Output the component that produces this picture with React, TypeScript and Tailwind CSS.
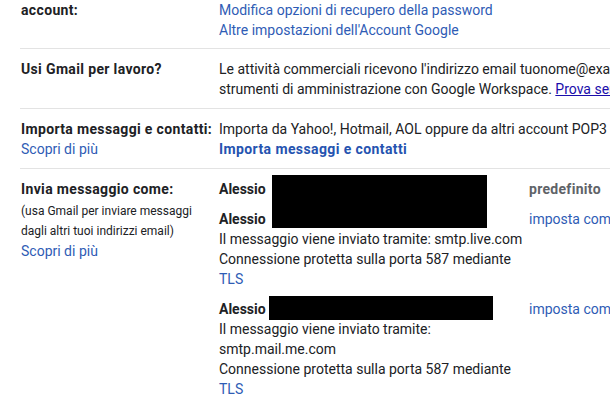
export default function App() {
  return (
    <div className="w-[610px] h-[406px] overflow-hidden bg-white font-['Roboto',sans-serif] text-[14px] leading-5 text-[#202124]">
      {/* Recupero account */}
      <div className="ml-5 flex border-b border-[#e3e3e3] pb-2">
        <div className="w-[199px] shrink-0 pl-px font-bold tracking-[0.35px]">account:</div>
        <div className="flex flex-col whitespace-nowrap text-[#2f5cb5]">
          <span>Modifica opzioni di recupero della password</span>
          <span>Altre impostazioni dell'Account Google</span>
        </div>
      </div>

      {/* Workspace */}
      <div className="ml-5 flex border-b border-[#e3e3e3] pt-[10px] pb-[9px]">
        <div className="w-[199px] shrink-0 pl-px font-bold tracking-[0.35px]">Usi Gmail per lavoro?</div>
        <div className="flex flex-col whitespace-nowrap">
          <span>Le attività commerciali ricevono l'indirizzo email tuonome@example.com</span>
          <span>
            strumenti di amministrazione con Google Workspace.{' '}
            <span className="text-[#1a0dab] underline">Prova senza costi</span>
          </span>
        </div>
      </div>

      {/* Importa */}
      <div className="ml-5 flex border-b border-[#e3e3e3] pt-[10px] pb-[9px]">
        <div className="w-[199px] shrink-0 pl-px flex flex-col whitespace-nowrap">
          <span className="font-bold tracking-[0.35px]">Importa messaggi e contatti:</span>
          <span className="text-[#2f5cb5]">Scopri di più</span>
        </div>
        <div className="flex flex-col whitespace-nowrap">
          <span>Importa da Yahoo!, Hotmail, AOL oppure da altri account POP3</span>
          <span className="font-bold tracking-[0.4px] text-[#2553b0]">Importa messaggi e contatti</span>
        </div>
      </div>

      {/* Invia messaggio come */}
      <div className="ml-5 flex pt-[10px]">
        <div className="w-[199px] shrink-0 pl-px flex flex-col whitespace-nowrap">
          <span className="font-bold tracking-[0.35px]">Invia messaggio come:</span>
          <span className="mt-[2px] text-[12px] leading-5">(usa Gmail per inviare messaggi</span>
          <span className="text-[12px] leading-5">dagli altri tuoi indirizzi email)</span>
          <span className="text-[#2f5cb5]">Scopri di più</span>
        </div>
        <div className="relative flex flex-col gap-[10px] whitespace-nowrap">
          <div className="flex">
            <div className="w-[310px] font-bold">Alessio</div>
            <div className="font-bold tracking-[0.3px] text-[#5f6368]">predefinito</div>
          </div>
          <div className="flex">
            <div className="w-[310px] flex flex-col">
              <span className="font-bold">Alessio</span>
              <span>Il messaggio viene inviato tramite: smtp.live.com</span>
              <span>Connessione protetta sulla porta 587 mediante</span>
              <span className="text-[#2f5cb5]">TLS</span>
            </div>
            <div className="text-[#2f5cb5]">imposta come predefinito</div>
          </div>
          <div className="flex">
            <div className="w-[310px] flex flex-col">
              <span className="font-bold">Alessio</span>
              <span>Il messaggio viene inviato tramite:</span>
              <span>smtp.mail.me.com</span>
              <span>Connessione protetta sulla porta 587 mediante</span>
              <span className="text-[#2f5cb5]">TLS</span>
            </div>
            <div className="text-[#2f5cb5]">imposta come predefinito</div>
          </div>

          {/* redazioni */}
          <div className="absolute left-[53px] top-[-4px] h-[53px] w-[215px] bg-black" />
          <div className="absolute left-[50px] top-[117px] h-[24px] w-[224px] bg-black" />
        </div>
      </div>
    </div>
  );
}
